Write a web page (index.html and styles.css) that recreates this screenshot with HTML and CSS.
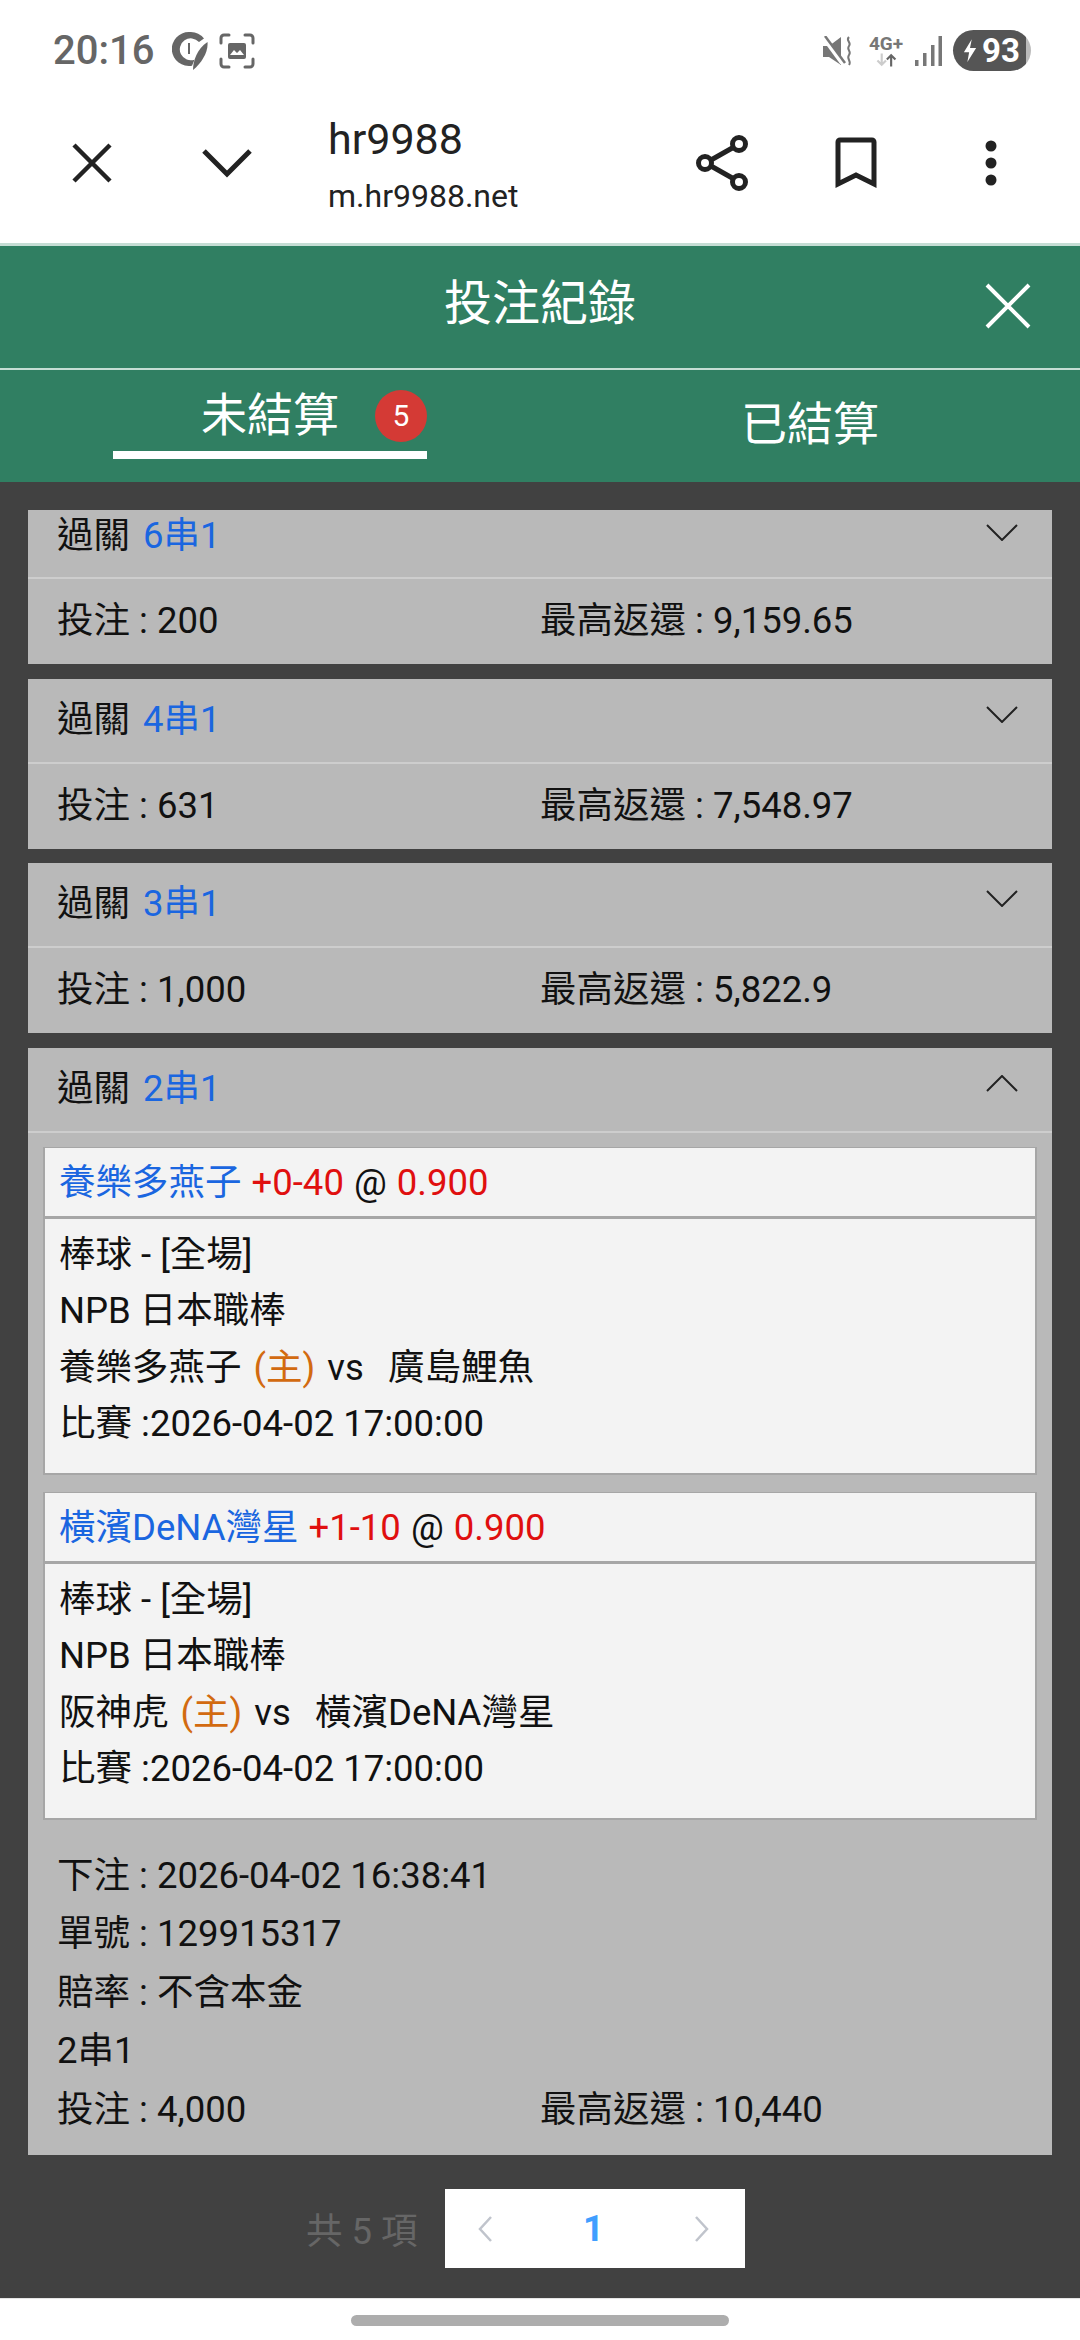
FILE: index.html
```html
<!DOCTYPE html>
<html lang="zh-Hant">
<head>
  <meta charset="UTF-8">
  <meta name="viewport" content="width=device-width, initial-scale=1.0">
  <title>hr9988</title>
  <link rel="stylesheet" href="styles.css">
</head>
<body>
  <div class="statusbar">
    <div class="status-left">
      <span class="time">20:16</span>
      <svg class="ic-pen" viewBox="0 0 36 40"><path d="M17 1a17 17 0 1 0 3 33.700l2.500-6A11 11 0 1 1 27 11l5-3.500A17 17 0 0 0 17 1z" fill="#666"/><path d="M35.500 11c1 10-6 21-14.500 28 0-9 4-21 14.500-28z" fill="#666"/><path d="M17 12v11" stroke="#666" stroke-width="2"/></svg>
      <svg class="ic-shot" viewBox="0 0 36 36" fill="none" stroke="#666" stroke-width="3" stroke-linecap="round"><path d="M2 10V5a3 3 0 0 1 3-3h5M26 2h5a3 3 0 0 1 3 3v5M34 26v5a3 3 0 0 1-3 3h-5M10 34H5a3 3 0 0 1-3-3v-5"/><rect x="9" y="10" width="18" height="16" rx="2" fill="#666" stroke="none"/><path d="M11 22l4-5 3 3 3-3 4 5z" fill="#fff" stroke="none"/></svg>
    </div>
    <div class="status-right">
      <svg class="ic-mute" viewBox="0 0 30 30"><path d="M0 10h6l12-9v28l-12-8H0q-1-5 0-11z" fill="#777"/><path d="M0 1l19 26" stroke="#fff" stroke-width="4"/><path d="M2 0l20 27" stroke="#777" stroke-width="2.500"/><path d="M26 1c-4 4 3 5 0 9-3 4 3 5 0 9-3 4 3 6 0 10" fill="none" stroke="#777" stroke-width="2"/></svg>
      <span class="net"><span class="net-label">4G+</span><svg viewBox="0 0 28 15" fill="none" stroke-width="2.500"><path d="M9 0v13M4 8l5 5 5-5" stroke="#ccc"/><path d="M20 15V2M15 7l5-5 5 5" stroke="#666"/></svg></span>
      <svg class="ic-signal" viewBox="0 0 27 30" fill="#777"><rect x="0" y="24" width="3.500" height="6"/><rect x="8" y="17" width="3.500" height="13"/><rect x="16" y="9" width="3.500" height="21"/><rect x="23.500" y="0" width="3.500" height="30"/></svg>
      <span class="battery"><svg viewBox="0 0 16 26"><path d="M10 0L1 15h6l-2 11 10-16H8z" fill="#fff"/></svg>93</span>
    </div>
  </div>

  <div class="appbar">
    <button class="nav-btn"><svg width="40" height="40" viewBox="0 0 40 40" fill="none" stroke="#222" stroke-width="4.500"><path d="M2 2l36 36M38 2L2 38"/></svg></button>
    <button class="nav-btn"><svg width="50" height="30" viewBox="0 0 50 30" fill="none" stroke="#222" stroke-width="5"><path d="M2 3l23 23L48 3"/></svg></button>
    <div class="page-title">
      <div class="page-name">hr9988</div>
      <div class="page-url">m.hr9988.net</div>
    </div>
    <div class="app-actions">
      <button class="nav-btn share-btn"><svg width="54" height="58" viewBox="0 0 54 58" fill="none" stroke="#222" stroke-width="5"><circle cx="43" cy="10" r="6.500"/><circle cx="9" cy="29" r="6.500"/><circle cx="43" cy="48" r="6.500"/><path d="M15 26l23-13M15 32l23 13"/></svg></button>
      <button class="nav-btn"><svg width="42" height="52" viewBox="0 0 42 52" fill="none" stroke="#222" stroke-width="5"><path d="M3 47V5a2 2 0 0 1 2-2h32a2 2 0 0 1 2 2v42L21 38z"/></svg></button>
      <button class="nav-btn"><svg width="12" height="46" viewBox="0 0 12 46" fill="#222"><circle cx="6" cy="6" r="5.500"/><circle cx="6" cy="23" r="5.500"/><circle cx="6" cy="40" r="5.500"/></svg></button>
    </div>
  </div>

  <div class="modal-head">
    <span></span>
    <h1>投注紀錄</h1>
    <svg class="modal-close" width="46" height="46" viewBox="0 0 46 46" fill="none" stroke="#fff" stroke-width="4"><path d="M2 2l42 42M44 2L2 44"/></svg>
  </div>

  <div class="tabs">
    <div class="tab"><span class="tab-active">未結算<i class="badge">5</i></span></div>
    <div class="tab"><span>已結算</span></div>
  </div>

  <div class="content">
    <div class="card">
      <div class="card-head clipped">
        <span>過關 <b>6串1</b></span>
        <svg class="chev" viewBox="0 0 32 17" fill="none" stroke="#222" stroke-width="2"><path d="M1 1l15 15L31 1"/></svg>
      </div>
      <div class="card-row"><span>投注 : 200</span><span>最高返還 : 9,159.65</span></div>
    </div>

    <div class="card">
      <div class="card-head">
        <span>過關 <b>4串1</b></span>
        <svg class="chev" viewBox="0 0 32 17" fill="none" stroke="#222" stroke-width="2"><path d="M1 1l15 15L31 1"/></svg>
      </div>
      <div class="card-row"><span>投注 : 631</span><span>最高返還 : 7,548.97</span></div>
    </div>

    <div class="card">
      <div class="card-head">
        <span>過關 <b>3串1</b></span>
        <svg class="chev" viewBox="0 0 32 17" fill="none" stroke="#222" stroke-width="2"><path d="M1 1l15 15L31 1"/></svg>
      </div>
      <div class="card-row"><span>投注 : 1,000</span><span>最高返還 : 5,822.9</span></div>
    </div>

    <div class="card">
      <div class="card-head">
        <span>過關 <b>2串1</b></span>
        <svg class="chev" viewBox="0 0 32 17" fill="none" stroke="#222" stroke-width="2"><path d="M1 16L16 1l15 15"/></svg>
      </div>
      <div class="legs">
        <div class="leg">
          <div class="leg-title"><b>養樂多燕子</b> <em>+0-40</em> @ <em>0.900</em></div>
          <div class="leg-body">
            <div>棒球 - [全場]</div>
            <div>NPB 日本職棒</div>
            <div class="teams">養樂多燕子 <u>(主)</u> vs &nbsp;廣島鯉魚</div>
            <div>比賽 :2026-04-02 17:00:00</div>
          </div>
        </div>
        <div class="leg">
          <div class="leg-title"><b>橫濱DeNA灣星</b> <em>+1-10</em> @ <em>0.900</em></div>
          <div class="leg-body">
            <div>棒球 - [全場]</div>
            <div>NPB 日本職棒</div>
            <div class="teams">阪神虎 <u>(主)</u> vs &nbsp;橫濱DeNA灣星</div>
            <div>比賽 :2026-04-02 17:00:00</div>
          </div>
        </div>
      </div>
      <div class="ticket">
        <div>下注 : 2026-04-02 16:38:41</div>
        <div>單號 : 129915317</div>
        <div>賠率 : 不含本金</div>
        <div>2串1</div>
        <div class="ticket-row"><span>投注 : 4,000</span><span>最高返還 : 10,440</span></div>
      </div>
    </div>

    <div class="pager-row">
      <span class="pager-total">共 5 項</span>
      <div class="pager">
        <svg width="16" height="28" viewBox="0 0 16 28" fill="none" stroke="#c0c4cc" stroke-width="2.500"><path d="M14 2L3 14l11 12"/></svg>
        <span class="pager-num">1</span>
        <svg width="16" height="28" viewBox="0 0 16 28" fill="none" stroke="#c0c4cc" stroke-width="2.500"><path d="M2 2l11 12L2 26"/></svg>
      </div>
    </div>
  </div>

  <div class="navbar"><div class="handle"></div></div>
</body>
</html>
```

FILE: styles.css
```css
/* Basic styling */
* {
  box-sizing: border-box;
}
html, body {
  margin: 0;
  padding: 0;
}
body {
  width: 1080px;
  height: 2340px;
  overflow: hidden;
  background-color: #fff;
  color: #111;
  font-family: Roboto, "Noto Sans CJK TC", sans-serif;
  font-size: 36.5px;
}
button {
  background: none;
  border: 0;
  padding: 0;
}

/* Phone status bar */
.statusbar {
  height: 100px;
  padding: 30px 49px 0 53px;
  display: flex;
  justify-content: space-between;
  align-items: flex-start;
}
.status-left, .status-right {
  display: flex;
  align-items: center;
  height: 41px;
}
.time {
  width: 119px;
  color: #666;
  font-size: 40px;
  font-weight: 500;
}
.ic-pen {
  width: 36px;
  height: 40px;
}
.ic-shot {
  width: 36px;
  height: 36px;
  margin-left: 11px;
}
.ic-mute {
  width: 30px;
  height: 30px;
}
.net {
  width: 36px;
  margin-left: 15px;
  display: flex;
  flex-direction: column;
  align-items: center;
}
.net-label {
  color: #777;
  font-size: 19px;
  font-weight: 700;
  line-height: 18px;
}
.net svg {
  width: 24px;
  height: 14px;
}
.ic-signal {
  width: 27px;
  height: 30px;
  margin-left: 11px;
}
.battery {
  width: 78px;
  height: 41px;
  margin-left: 11px;
  padding-left: 10px;
  display: flex;
  align-items: center;
  gap: 5px;
  border-radius: 21px;
  background: linear-gradient(to right, #555 93%, #bbb 93%);
  color: #fff;
  font-size: 33px;
  font-weight: 700;
}
.battery svg {
  width: 14px;
  height: 25px;
}

/* Browser bar */
.appbar {
  height: 143px;
  padding: 0 22px 18px 24px;
  display: flex;
  align-items: center;
}
.nav-btn {
  width: 135px;
  display: flex;
  justify-content: center;
  align-items: center;
}
.share-btn svg {
  margin-left: 4px;
}
.page-title {
  margin-left: 34px;
  margin-top: -3px;
  color: #222;
}
.page-name {
  font-size: 43px;
  line-height: 70px;
}
.page-url {
  font-size: 32px;
  line-height: 44px;
}
.app-actions {
  margin-left: auto;
  display: flex;
}

/* Green modal header */
.modal-head {
  height: 125px;
  display: grid;
  grid-template-columns: 1fr auto 1fr;
  align-items: center;
  border-top: 3px solid #c5ddd4;
  background-color: #307f62;
  color: #fff;
}
.modal-head h1 {
  margin: 0;
  font-size: 48px;
  font-weight: 400;
  line-height: 60px;
  margin-top: -7px;
}
.modal-close {
  justify-self: end;
  margin-right: 49px;
  margin-top: -3px;
}
.tabs {
  height: 114px;
  display: flex;
  border-top: 2px solid #c5ddd4;
  background-color: #307f62;
  color: #fff;
  font-size: 46px;
}
.tab {
  width: 540px;
  display: flex;
  justify-content: center;
  padding-top: 26px;
}
.tab > span {
  height: 56px;
  line-height: 56px;
}
.tab > .tab-active {
  position: relative;
  width: 314px;
  height: 72px;
  margin-top: -9px;
  text-align: center;
  border-bottom: 8px solid #fff;
}
.badge {
  position: absolute;
  top: 3px;
  right: 0;
  width: 52px;
  height: 52px;
  border-radius: 50%;
  background-color: #d43a35;
  font-size: 30px;
  font-style: normal;
  line-height: 52px;
  text-align: center;
}

/* Bet list */
.content {
  height: 1816px;
  padding: 28px 28px 0;
  background-color: #414141;
}
.card {
  margin-bottom: 14.5px;
  background-color: #b9b9b9;
}
.card-head {
  height: 85px;
  padding: 14px 34px 0 29px;
  display: flex;
  justify-content: space-between;
  border-bottom: 2px solid #cdcdcd;
  line-height: 54px;
  word-spacing: 4px;
}
.card-head.clipped {
  height: 69px;
  padding-top: 2px;
  line-height: 48px;
}
.card-head b {
  color: #1a66e0;
  font-weight: 400;
}
.chev {
  width: 32px;
  height: 17px;
  margin-top: 13px;
}
.clipped .chev {
  margin-top: 12px;
}
.card-row, .ticket-row {
  display: grid;
  grid-template-columns: 483px 1fr;
}
.card-row {
  height: 85px;
  padding: 0 0 8px 29px;
  align-items: center;
}

/* Bet legs */
.legs {
  padding: 14px 15px 0;
}
.leg {
  margin-bottom: 17px;
  border: 2px solid #a6a6a6;
  border-top-width: 1px;
  background-color: #f3f3f3;
}
.leg-title {
  height: 71px;
  padding: 2px 14px 0;
  border-bottom: 3px solid #a6a6a6;
  line-height: 66px;
  word-spacing: 1px;
}
.leg-title b {
  color: #1a66e0;
  font-weight: 400;
}
.leg-title em {
  color: #e00f0f;
  font-style: normal;
}
.leg-body {
  height: 254px;
  padding: 8px 14px 0;
  line-height: 56.5px;
}
.teams {
  word-spacing: 3px;
}
.leg-body u {
  color: #d26a10;
  text-decoration: none;
}
.ticket {
  padding: 10px 29px 0;
  height: 318px;
  line-height: 58.5px;
}

/* Pagination */
.pager-row {
  padding: 20px 0 0 278px;
  display: flex;
  align-items: center;
}
.pager-total {
  width: 139px;
  color: #666;
}
.pager {
  width: 300px;
  height: 79px;
  padding: 0 35px 0 32px;
  display: flex;
  justify-content: space-between;
  align-items: center;
  background-color: #fff;
}
.pager-num {
  color: #409eff;
  font-weight: 700;
}
.navbar {
  height: 42px;
  padding-top: 16px;
  display: flex;
  justify-content: center;
  border-top: 1px solid #e4e4e4;
}
.handle {
  width: 378px;
  height: 11px;
  border-radius: 6px;
  background-color: #adadad;
}
```
